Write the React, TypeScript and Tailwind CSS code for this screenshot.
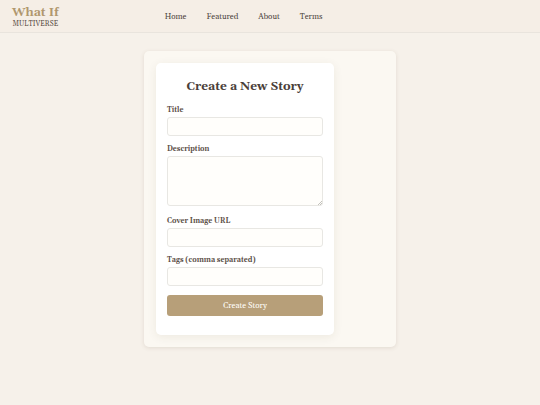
import { FormEventHandler, InputHTMLAttributes, useState } from 'react';

const links = [
    { label: 'Home', href: '#home' },
    { label: 'Featured', href: '#featured' },
    { label: 'About', href: '#about' },
    { label: 'Terms', href: '#terms' },
];

const labelClass = 'block text-[7px] leading-[10px] font-bold text-[#5c5048]';
const fieldClass = 'block w-full rounded-[3px] border border-[#e8e7e3] bg-[#fffefb] px-1 text-[7px] text-[#4a4039] focus:border-[#b79f79] focus:outline-none';

function TextField({ id, label, ...props }: { id: string, label: string } & InputHTMLAttributes<HTMLInputElement>) {
    return (
        <div>
            <label htmlFor={id} className={labelClass}>{label}</label>
            <input id={id} name={id} className={`${fieldClass} mt-0.5 h-[19px]`} {...props} />
        </div>
    );
}

function Header() {
    return (
        <header className="flex h-[33px] items-center border-b border-[#e9e4dd] bg-[#f5eee6] px-3 pt-0.5">
            <a href="#home" className="flex flex-col items-center text-center">
                <span className="text-[12px] leading-[14px] font-bold text-[#b0976e]">What If</span>
                <span className="text-[7px] leading-2 text-[#5c5048]">MULTIVERSE</span>
            </a>
            <nav className="ml-[106px] flex gap-5 text-[8px] leading-3 text-[#4f463f]">
                {links.map((link) => (
                    <a key={link.label} href={link.href}>{link.label}</a>
                ))}
            </nav>
        </header>
    );
}

export default function App() {
    const [data, setData] = useState({ title: '', description: '', cover: '', tags: '' });

    const submit: FormEventHandler = (e) => {
        e.preventDefault();
    };

    return (
        <div className="min-h-screen bg-[#f6f1ea] font-[Gelasio,Georgia,'Liberation_Serif',serif]">
            <Header />

            <main className="mx-auto mt-[18px] w-full max-w-[252px] rounded-[5px] bg-[#fbf8f2] p-3 shadow-[0_1px_4px_rgba(80,60,30,0.12)]">
                <form onSubmit={submit} className="max-w-[178px] rounded-[5px] bg-white px-[11px] pt-4 pb-[19px] shadow-[0_2px_10px_rgba(80,60,30,0.08)]">
                    <h1 className="text-center text-[12px] leading-4 font-bold text-[#4a4039]">Create a New Story</h1>

                    <div className="mt-[10px] flex flex-col gap-2">
                        <TextField
                            id="title"
                            label="Title"
                            value={data.title}
                            onChange={(e) => setData({ ...data, title: e.target.value })}
                            required
                        />

                        <div className="relative mb-0.5">
                            <label htmlFor="description" className={labelClass}>Description</label>
                            <textarea
                                id="description"
                                name="description"
                                value={data.description}
                                className={`${fieldClass} mt-0.5 h-[50px] resize-none`}
                                onChange={(e) => setData({ ...data, description: e.target.value })}
                                required
                            />
                            <svg viewBox="0 0 4 4" className="pointer-events-none absolute right-px bottom-px size-1" stroke="#9b9894" strokeWidth="0.6" aria-hidden="true">
                                <path d="M0 4L4 0M2 4L4 2" />
                            </svg>
                        </div>

                        <TextField
                            id="cover"
                            label="Cover Image URL"
                            value={data.cover}
                            onChange={(e) => setData({ ...data, cover: e.target.value })}
                        />

                        <TextField
                            id="tags"
                            label="Tags (comma separated)"
                            value={data.tags}
                            onChange={(e) => setData({ ...data, tags: e.target.value })}
                        />

                        <button type="submit" className="mt-px h-[21px] w-full cursor-pointer rounded-[3px] bg-[#b79f79] text-[8px] text-[#fffefb]">
                            Create Story
                        </button>
                    </div>
                </form>
            </main>
        </div>
    );
}
